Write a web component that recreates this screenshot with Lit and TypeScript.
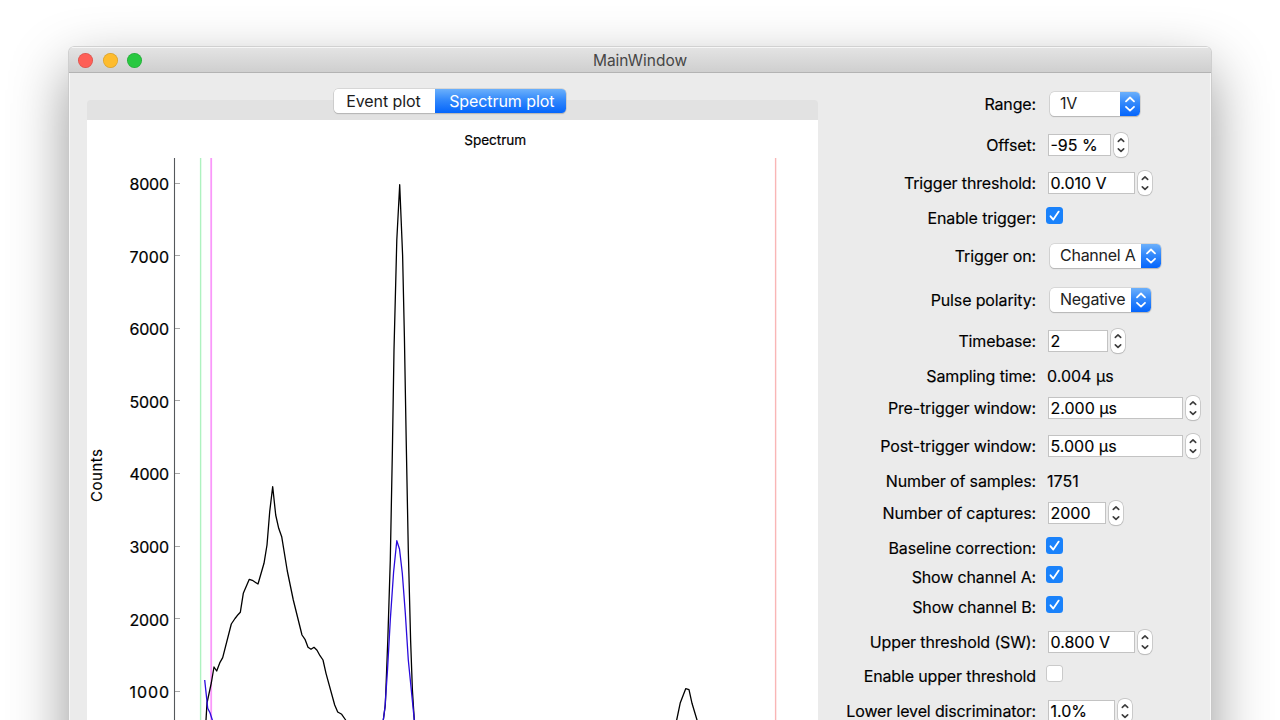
import { LitElement, html, css, svg } from "lit";
import { customElement } from "lit/decorators.js";

type Kind = "combo" | "spin" | "check" | "text";
interface Field {
  label: string;
  kind: Kind;
  value?: string;
  width?: number;
  checked?: boolean;
  gap: number;
}

const FIELDS: Field[] = [
  { label: "Range:", kind: "combo", value: "1V", width: 90, gap: 0 },
  { label: "Offset:", kind: "spin", value: "-95 %", width: 63, gap: 17 },
  { label: "Trigger threshold:", kind: "spin", value: "0.010 V", width: 87.5, gap: 14 },
  { label: "Enable trigger:", kind: "check", checked: true, gap: 11 },
  { label: "Trigger on:", kind: "combo", value: "Channel A", width: 111, gap: 14 },
  { label: "Pulse polarity:", kind: "combo", value: "Negative", width: 101, gap: 20 },
  { label: "Timebase:", kind: "spin", value: "2", width: 60.5, gap: 17 },
  { label: "Sampling time:", kind: "text", value: "0.004 µs", gap: 11 },
  { label: "Pre-trigger window:", kind: "spin", value: "2.000 µs", width: 135, gap: 8 },
  { label: "Post-trigger window:", kind: "spin", value: "5.000 µs", width: 135, gap: 14 },
  { label: "Number of samples:", kind: "text", value: "1751", gap: 11 },
  { label: "Number of captures:", kind: "spin", value: "2000", width: 58, gap: 8 },
  { label: "Baseline correction:", kind: "check", checked: true, gap: 11 },
  { label: "Show channel A:", kind: "check", checked: true, gap: 5 },
  { label: "Show channel B:", kind: "check", checked: true, gap: 6 },
  { label: "Upper threshold (SW):", kind: "spin", value: "0.800 V", width: 87.5, gap: 10.5 },
  { label: "Enable upper threshold", kind: "check", checked: false, gap: 10.5 },
  { label: "Lower level discriminator:", kind: "spin", value: "1.0%", width: 67, gap: 11 },
];

const TICKS = [
  [8000, 184], [7000, 256.5], [6000, 329], [5000, 401.5],
  [4000, 474.3], [3000, 547], [2000, 619.5], [1000, 692.2],
];

const BLACK_A =
  "204,740 206,720 207,703 211.3,683 214,667 216.7,671 220,662.3 222.7,657.7 231.3,624 235,618.5 238,614.7 240.3,612.3 243.3,593.3 249.3,579.3 252.3,580.3 258,584 264,563.3 267,545 269.7,511.7 272.7,486.7 275.7,515 278.7,528.3 281.7,536.7 287.3,571 293.3,600 302,635 305,639.3 308,647.3 311,649.3 314,647.3 317,650.3 320,655.7 323,660 326,673.3 334.7,705 337.7,712 341.7,714.3 345.3,719.5 350,728";
const BLACK_B =
  "380,740 383.3,720 385.3,705 387.8,640 390.3,560 392.4,450 394,350 396.8,240 399.7,184.7 402.6,255 404.4,337 406.2,440 408.3,550 410.6,640 412.4,690 414.3,720 416,740";
const BLACK_C =
  "675,730 676.7,720 680.3,702.7 685.7,688.7 689,689.7 692,703.3 697,720 700,732";
const BLUE_A = "204.7,680 207.7,708.3 210,712.7 212.3,720 216,735";
const BLUE_B =
  "382,728 383.3,720 385,707 387.5,670 390.3,620 393.6,572 396.8,540.7 399.5,549 402.3,573.3 405.3,613 408.3,660 411.3,690 414.3,720 416,735";

@customElement("spectrum-chart")
class SpectrumChart extends LitElement {
  static styles = css`
    :host { display: block; background: #fff; height: 640px; }
    svg { display: block; }
    text { font-family: Inter, "Liberation Sans", sans-serif; fill: #000; stroke: #000; stroke-width: 0.2; }
    .tick { font-size: 16px; text-anchor: end; }
    .title { font-size: 13.6px; text-anchor: middle; }
    .axis-name { font-size: 15px; text-anchor: middle; stroke-width: 0.1; }
    .axis { stroke: #55585c; stroke-width: 1.1; }
    .mark { stroke: #a8a8a8; stroke-width: 1; }
    .low { stroke: #aef2c0; stroke-width: 1.4; }
    .mid { stroke: #fa98fa; stroke-width: 1.8; }
    .high { stroke: #f9b6b6; stroke-width: 1.4; }
    .trace { fill: none; stroke: #000; stroke-width: 1.3; stroke-linejoin: round; }
    .blue { stroke: #2a0bdc; }
  `;
  render() {
    return html`<svg width="731" height="640" viewBox="87 120 731 640">
      <text class="title" x="495.2" y="144.6" textLength="62">Spectrum</text>
      <text class="axis-name" transform="translate(102.3 475.5) rotate(-90)" textLength="53">Counts</text>
      <line class="low" x1="200.6" x2="200.6" y1="158" y2="760"></line>
      <line class="mid" x1="211.2" x2="211.2" y1="158" y2="760"></line>
      <line class="high" x1="775.6" x2="775.6" y1="158" y2="760"></line>
      ${TICKS.map(
        ([n, y]) => svg`<text class="tick" x="169" y=${y + 6} textLength="39.5">${n}</text>
          <line class="mark" x1="174.5" x2="180" y1=${Math.floor(y) - 0.5} y2=${Math.floor(y) - 0.5}></line>`
      )}
      <line class="axis" x1="174.5" x2="174.5" y1="158" y2="760"></line>
      <polyline class="trace" points=${BLACK_A}></polyline>
      <polyline class="trace" points=${BLACK_B}></polyline>
      <polyline class="trace" points=${BLACK_C}></polyline>
      <polyline class="trace blue" points=${BLUE_A}></polyline>
      <polyline class="trace blue" points=${BLUE_B}></polyline>
    </svg>`;
  }
}

@customElement("settings-form")
class SettingsForm extends LitElement {
  static styles = css`
    :host { display: block; -webkit-text-stroke: 0.15px; }
    .row { display: grid; grid-template-columns: 218px 1fr; column-gap: 11px; height: 24px; align-items: center; white-space: nowrap; }
    .label { text-align: right; line-height: 24px; letter-spacing: -0.14px; }
    .combo { display: flex; align-items: stretch; box-sizing: border-box; height: 24px; margin-left: 3px; border-radius: 4.5px; background: #fff; box-shadow: 0 0 0 0.6px #c4c4c4, 0 1px 1px #aaa; overflow: hidden; }
    .combo .val { flex: 1; padding-left: 10px; line-height: 23px; color: #222; letter-spacing: -0.26px; -webkit-text-stroke: 0; }
    .arrows { width: 20px; display: block; background: linear-gradient(#6cb0fb, #3389fb 45%, #0465fc); }
    .spin { display: flex; align-items: center; height: 24px; }
    .box { box-sizing: border-box; height: 22px; margin-left: 0.5px; border: 1px solid #c3c3c3; background: #fff; padding-left: 2px; line-height: 21px; }
    .stepper { display: block; box-sizing: border-box; width: 14px; height: 24px; margin-left: 3px; border-radius: 6px; background: #fff; box-shadow: 0 0 0 0.7px #bdbdbd, 0 1px 1px #bbb; }
    .check { width: 17px; height: 17px; border-radius: 3.5px; margin: -6px 0 0 -0.6px; background: #1a82fb; }
    .check.off { background: #fff; box-shadow: inset 0 0 0 1px #cacaca; }
    svg { display: block; }
    .w { fill: none; stroke: #fff; stroke-width: 1.8; stroke-linecap: round; stroke-linejoin: round; }
    .d { fill: none; stroke: #3c3c3c; stroke-width: 1.6; stroke-linecap: round; stroke-linejoin: round; }
  `;
  control(f: Field) {
    switch (f.kind) {
      case "combo":
        return html`<div class="combo" style="width:${f.width}px">
          <span class="val">${f.value}</span>
          <span class="arrows"><svg width="20" height="24"><path class="w" d="M6 9.3 10 5.5 14 9.3M6 14.8 10 18.6 14 14.8"></path></svg></span>
        </div>`;
      case "spin":
        return html`<div class="spin">
          <div class="box" style="width:${f.width}px">${f.value}</div>
          <span class="stepper"><svg width="14" height="24"><path class="d" d="M4.3 8.4 7 5.9 9.7 8.4M4.3 15.9 7 18.4 9.7 15.9"></path></svg></span>
        </div>`;
      case "check":
        return html`<div class="check ${f.checked ? "" : "off"}">
          ${f.checked ? html`<svg width="17" height="17"><path class="w" d="M4.5 9.3 7.3 12.6 12.7 4.6"></path></svg>` : ""}
        </div>`;
      default:
        return html`<span>${f.value}</span>`;
    }
  }
  render() {
    return FIELDS.map(
      (f) => html`<div class="row" style="margin-top:${f.gap}px">
        <div class="label">${f.label}</div>
        <div>${this.control(f)}</div>
      </div>`
    );
  }
}

@customElement("app-root")
class AppRoot extends LitElement {
  static styles = css`
    :host { display: block; box-sizing: border-box; height: 720px; padding: 47px 69px 0; overflow: hidden; background: #fff; font: 16px Inter, "Liberation Sans", sans-serif; color: #000; }
    .window { height: 900px; border-radius: 5px 5px 0 0; background: #ebebeb; box-shadow: 0 0 0 0.8px #c8c8c8, 0 23px 58px rgba(0, 0, 0, 0.42); overflow: hidden; }
    .bar { display: grid; grid-template-columns: 1fr auto 1fr; align-items: center; box-sizing: border-box; height: 26px; padding: 0 0 0 9px; border-bottom: 1px solid #b3b3b3; background: linear-gradient(#e4e4e4, #cfcfcf); box-shadow: inset 0 1px #f6f6f6; }
    .lights { display: flex; gap: 9.5px; padding-top: 1px; }
    .light { width: 15px; height: 15px; border-radius: 50%; box-shadow: inset 0 0 0 0.7px rgba(0, 0, 0, 0.14); }
    .red { background: #fe5f57; }
    .yellow { background: #febc2e; }
    .green { background: #28c840; }
    .name { color: #464646; font-size: 15.5px; margin: 1px 9px 0 0; }
    .body { display: flex; box-shadow: inset 1px 0 #f8f8f8, inset -1px 0 #f8f8f8; height: 870px; }
    .left { width: 731px; margin: 27px 0 0 18px; }
    .pane { border-radius: 4px 4px 0 0; background: #e2e2e2; height: 20px; display: flex; justify-content: center; align-items: flex-start; }
    .tabs { display: flex; height: 24px; margin: -11px 5px 0 0; border-radius: 4.5px; box-shadow: 0 0 0 0.6px #c2c2c2, 0 1px 1px #aaa; overflow: hidden; line-height: 24px; text-align: center; letter-spacing: -0.08px; }
    .tab { box-sizing: border-box; width: 101.5px; padding-right: 2px; background: #fff; color: #1c1c1c; }
    .tab.on { width: 131px; padding: 0 0 0 2px; color: #fff; background: linear-gradient(#6bb0fb, #3389fb 45%, #0465fc); }
    settings-form { margin: 19px 0 0 0; width: 376px; }
  `;
  render() {
    return html`<div class="window">
      <div class="bar">
        <div class="lights"><i class="light red"></i><i class="light yellow"></i><i class="light green"></i></div>
        <div class="name">MainWindow</div>
      </div>
      <div class="body">
        <div class="left">
          <div class="pane"><div class="tabs"><div class="tab">Event plot</div><div class="tab on">Spectrum plot</div></div></div>
          <spectrum-chart></spectrum-chart>
        </div>
        <settings-form></settings-form>
      </div>
    </div>`;
  }
}
